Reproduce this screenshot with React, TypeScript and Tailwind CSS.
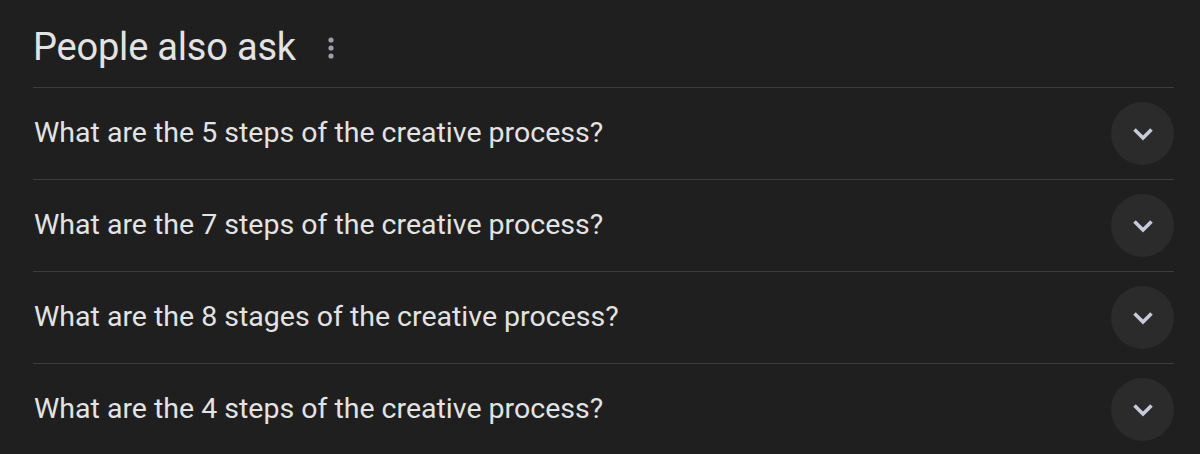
const questions = [
    "What are the 5 steps of the creative process?",
    "What are the 7 steps of the creative process?",
    "What are the 8 stages of the creative process?",
    "What are the 4 steps of the creative process?",
]

export default function App() {
    return (
        <div className="w-[1200px] h-[454px] overflow-hidden bg-[#1f1f1f] pl-[33px] pr-[26px]" style={{ fontFamily: "Roboto, 'Noto Sans', sans-serif" }}>
            {/* Header */}
            <div className="h-[87px] flex items-center gap-[32px] pt-[7px]">
                <h2 className="text-[38px] text-[#e3e3e3] leading-none tracking-[-0.2px]">People also ask</h2>
                <svg width="6" height="22" viewBox="0 0 6 22" className="mt-[2px]">
                    <circle cx="3" cy="3" r="2.6" fill="#9aa0a6" />
                    <circle cx="3" cy="11" r="2.6" fill="#9aa0a6" />
                    <circle cx="3" cy="19" r="2.6" fill="#9aa0a6" />
                </svg>
            </div>

            {questions.map((q, index) => (
                <div key={index} className="h-[92px] border-t border-[#3c3c3c] flex items-center justify-between">
                    <p className="text-[28.5px] text-[#e3e3e3] pl-[1px] leading-none">{q}</p>
                    <div className="w-[63px] h-[63px] rounded-full bg-[#2b2b2b] flex items-center justify-center">
                        <svg width="22" height="14" viewBox="0 0 22 14">
                            <polyline points="2.5,2.5 11,11 19.5,2.5" fill="none" stroke="#c7cad8" strokeWidth="3.6" strokeLinecap="butt" strokeLinejoin="miter" />
                        </svg>
                    </div>
                </div>
            ))}
        </div>
    )
}
